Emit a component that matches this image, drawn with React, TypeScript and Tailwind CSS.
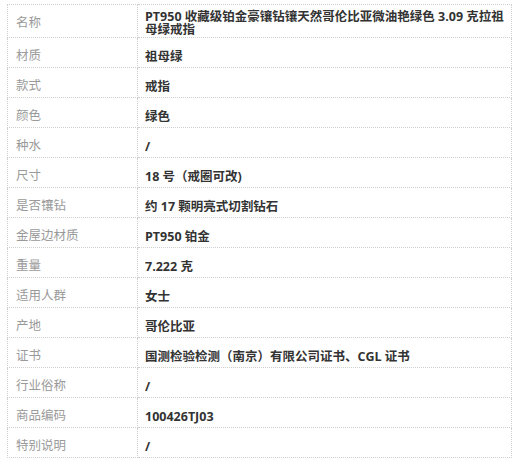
const rows: [string, string][] = [
  ['名称', 'PT950 收藏级铂金豪镶钻镶天然哥伦比亚微油艳绿色 3.09 克拉祖母绿戒指'],
  ['材质', '祖母绿'],
  ['款式', '戒指'],
  ['颜色', '绿色'],
  ['种水', '/'],
  ['尺寸', '18 号（戒圈可改)'],
  ['是否镶钻', '约 17 颗明亮式切割钻石'],
  ['金屋边材质', 'PT950 铂金'],
  ['重量', '7.222 克'],
  ['适用人群', '女士'],
  ['产地', '哥伦比亚'],
  ['证书', '国测检验检测（南京）有限公司证书、CGL 证书'],
  ['行业俗称', '/'],
  ['商品编码', '100426TJ03'],
  ['特别说明', '/'],
]

const App = () => {
  return (
    <main
      className="h-[467px] w-[520px] bg-white pl-[7px] pt-[4px]"
      style={{ fontFamily: '"Open Sans", "Noto Sans CJK SC", sans-serif' }}
    >
      <table className="w-[505px] border-collapse text-[12.5px]">
        <tbody>
          {rows.map(([label, value], i) => {
            // the first row wraps onto two lines, so it gets less top padding
            const pad = i === 0 ? 'pt-[5px] pb-[1px]' : 'pt-[7px] pb-0'
            return (
              <tr key={label} className={i === 0 ? 'h-[33px]' : 'h-[30px]'}>
                <td
                  className={`w-[130px] border border-dotted border-[#cfcfcf] px-[8px] align-middle text-[#9a9a9a] ${pad}`}
                >
                  {label}
                </td>
                <td
                  className={`border border-dotted border-[#cfcfcf] pl-[7px] pr-[4px] align-middle font-bold leading-[13px] text-[#333] ${pad}`}
                >
                  {value}
                </td>
              </tr>
            )
          })}
        </tbody>
      </table>
    </main>
  )
}

export default App
